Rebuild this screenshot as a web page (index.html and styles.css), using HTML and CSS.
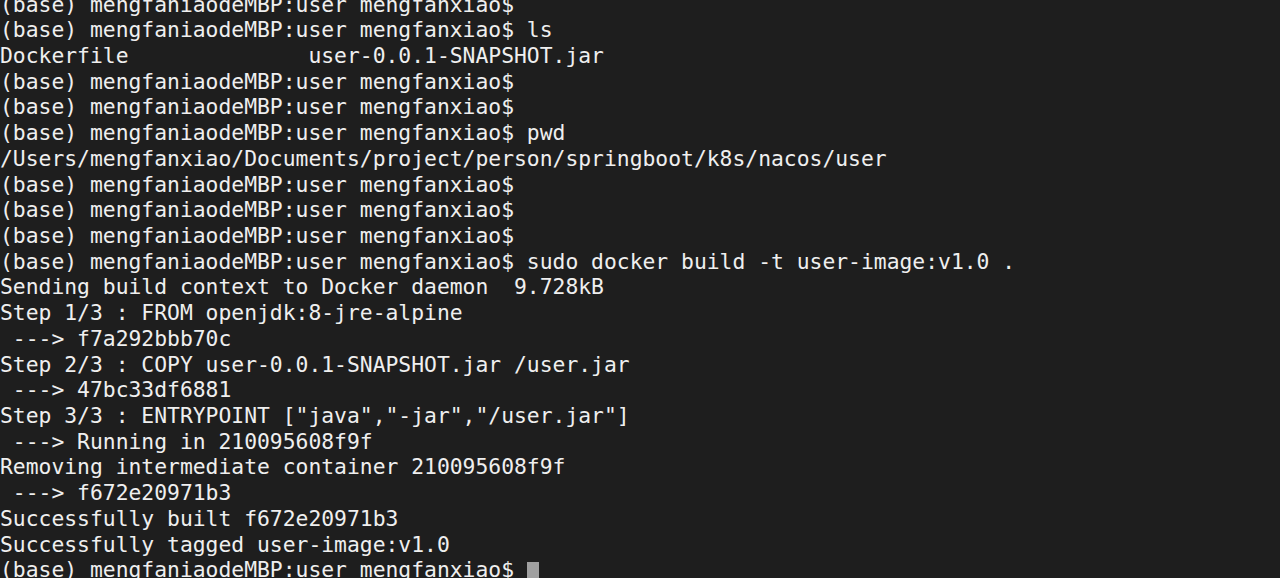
FILE: index.html
```html
<!DOCTYPE html>
<html lang="en">
  <head>
    <meta charset="UTF-8" />
    <meta name="viewport" content="width=device-width, initial-scale=1.0" />
    <title>Terminal</title>
    <link rel="stylesheet" href="styles.css">
  </head>
  <body>
    <div class="term">
<pre class="out">(base) mengfaniaodeMBP:user mengfanxiao$
(base) mengfaniaodeMBP:user mengfanxiao$ ls
Dockerfile              user-0.0.1-SNAPSHOT.jar
(base) mengfaniaodeMBP:user mengfanxiao$
(base) mengfaniaodeMBP:user mengfanxiao$
(base) mengfaniaodeMBP:user mengfanxiao$ pwd
/Users/mengfanxiao/Documents/project/person/springboot/k8s/nacos/user
(base) mengfaniaodeMBP:user mengfanxiao$
(base) mengfaniaodeMBP:user mengfanxiao$
(base) mengfaniaodeMBP:user mengfanxiao$
(base) mengfaniaodeMBP:user mengfanxiao$ sudo docker build -t user-image:v1.0 .
Sending build context to Docker daemon  9.728kB
Step 1/3 : FROM openjdk:8-jre-alpine
 ---&gt; f7a292bbb70c
Step 2/3 : COPY user-0.0.1-SNAPSHOT.jar /user.jar
 ---&gt; 47bc33df6881
Step 3/3 : ENTRYPOINT ["java","-jar","/user.jar"]
 ---&gt; Running in 210095608f9f
Removing intermediate container 210095608f9f
 ---&gt; f672e20971b3
Successfully built f672e20971b3
Successfully tagged user-image:v1.0
(base) mengfaniaodeMBP:user mengfanxiao$ <span class="cursor"> </span></pre>
    </div>
  </body>
</html>
```

FILE: styles.css
```css
* {
  margin: 0;
  padding: 0;
}
html,
body {
  height: 100%;
  background-color: #1e1e1e;
  overflow: hidden;
}
.term {
  height: 100%;
  background-color: #1e1e1e;
}
.out {
  margin-top: -8.5px;
  font-family: "DejaVu Sans Mono", "Liberation Mono", monospace;
  font-size: 21.35px;
  line-height: 25.72px;
  color: #efefef;
  white-space: pre;
}
.cursor {
  display: inline-block;
  width: 12px;
  height: 21px;
  vertical-align: -5px;
  background-color: #a0a0a0;
}
```
